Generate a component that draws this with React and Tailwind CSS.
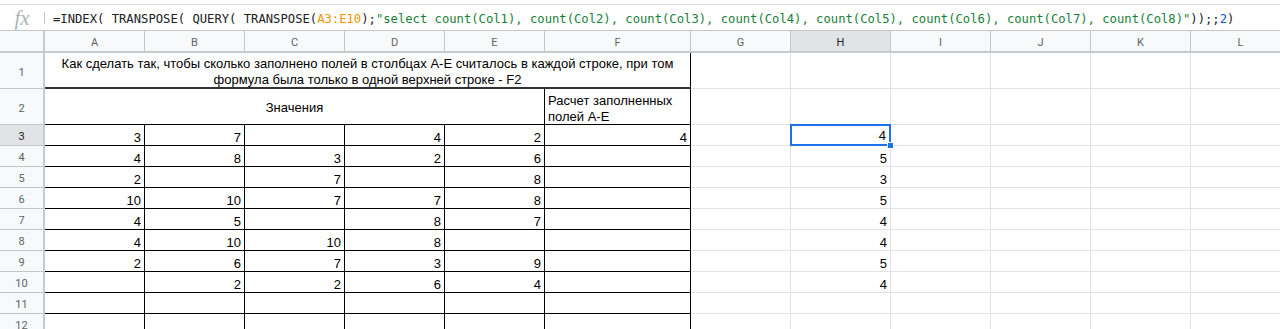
import React from "react";

const cols = ["A", "B", "C", "D", "E", "F", "G", "H", "I", "J", "K", "L"];
const data = [
  [3, 7, "", 4, 2],
  [4, 8, 3, 2, 6],
  [2, "", 7, "", 8],
  [10, 10, 7, 7, 8],
  [4, 5, "", 8, 7],
  [4, 10, 10, 8, ""],
  [2, 6, 7, 3, 9],
  ["", 2, 2, 6, 4],
  ["", "", "", "", ""],
  ["", "", "", "", ""],
];
const fVals = [4, "", "", "", "", "", "", "", "", ""];
const hVals = [4, 5, 3, 5, 4, 4, 5, 4, "", ""];

const cellFont = { fontFamily: '"Liberation Sans", Arial, sans-serif' };
const hdrFont = { fontFamily: 'Roboto, "Liberation Sans", Arial, sans-serif' };

function RowHeader({ n, active }) {
  return (
    <div
      className={`flex items-center justify-center pt-[5px] border-b border-[#c4c7c5] border-r-2 border-r-[#c8cacc] text-[11px] ${
        active ? "bg-[#e1e3e6] text-[#202124]" : "bg-[#f8f9fa] text-[#5f6368]"
      }`}
      style={hdrFont}
    >
      {n}
    </div>
  );
}

function NumCell({ v, black = true }) {
  return (
    <div
      className={`flex items-end justify-end pr-[3px] text-[13px] leading-[15px] text-black border-r border-b ${
        black ? "border-black" : "border-[#e2e3e3]"
      }`}
      style={cellFont}
    >
      {v}
    </div>
  );
}

function GridCell() {
  return <div className="border-r border-b border-[#e2e3e3]" />;
}

export default function App() {
  return (
    <div className="w-[1280px] h-[329px] overflow-hidden bg-white">
      <div className="h-[4px] bg-white" />
      <div className="h-[26px] border-t border-[#dadce0] flex items-center">
        <div className="w-[44px] flex justify-center pt-[2px]">
          <span
            className="italic text-[21px] text-[#b0b3b7] leading-none"
            style={{ fontFamily: '"Liberation Serif", "DejaVu Serif", serif' }}
          >
            fx
          </span>
        </div>
        <div className="w-px h-[12px] bg-[#c4c7c5]" />
        <div
          className="ml-[8px] pt-[4px] whitespace-nowrap text-[12.2px] text-[#202124]"
          style={{ fontFamily: '"DejaVu Sans Mono", "Liberation Mono", monospace' }}
        >
          =INDEX( TRANSPOSE( QUERY( TRANSPOSE(
          <span className="text-[#f09300]">A3:E10</span>);
          <span className="text-[#188038]">
            "select count(Col1), count(Col2), count(Col3), count(Col4), count(Col5), count(Col6), count(Col7), count(Col8)"
          </span>
          ));;<span className="text-[#1155cc]">2</span>)
        </div>
      </div>

      <div className="grid grid-cols-[45px_100px_100px_100px_100px_100px_146px_100px_100px_100px_100px_100px_100px] grid-rows-[23px_36px_36px_repeat(10,21px)] w-[1291px]">
        {/* header */}
        <div className="bg-[#f8f9fa] border-t border-[#c4c7c5] border-b-2 border-b-[#c8cacc] border-r-2 border-r-[#c8cacc]" />
        {cols.map((c) => (
          <div
            key={c}
            className={`flex items-center justify-center pt-[4px] border-t border-[#c4c7c5] border-r border-r-[#c4c7c5] border-b-2 border-b-[#c8cacc] text-[11px] ${
              c === "H" ? "bg-[#e1e3e6] text-[#202124]" : "bg-[#f8f9fa] text-[#5f6368]"
            }`}
            style={hdrFont}
          >
            {c}
          </div>
        ))}

        {/* row 1 */}
        <RowHeader n={1} />
        <div
          className="col-span-6 flex items-center justify-center text-center pt-[4px] text-[13px] leading-[16px] text-black border-r border-r-black border-b-2 border-b-[#333]"
          style={cellFont}
        >
          <div>
            Как сделать так, чтобы сколько заполнено полей в столбцах A-E считалось в каждой строке, при том
            <br />
            формула была только в одной верхней строке - F2
          </div>
        </div>
        {[0, 1, 2, 3, 4, 5].map((i) => (
          <GridCell key={i} />
        ))}

        {/* row 2 */}
        <RowHeader n={2} />
        <div
          className="col-span-5 flex items-center justify-center pt-[3px] text-[13px] leading-[16px] text-black border-r border-b border-black"
          style={cellFont}
        >
          Значения
        </div>
        <div
          className="flex items-center pl-[3px] pt-[5px] text-[13px] leading-[16px] text-black border-r border-b border-black"
          style={cellFont}
        >
          <div>
            Расчет заполненных
            <br />
            полей A-E
          </div>
        </div>
        {[0, 1, 2, 3, 4, 5].map((i) => (
          <GridCell key={i} />
        ))}

        {/* data rows */}
        {data.map((row, r) => (
          <React.Fragment key={r}>
            <RowHeader n={r + 3} active={r === 0} />
            {row.map((v, c) => (
              <NumCell key={c} v={v} />
            ))}
            <NumCell v={fVals[r]} />
            <GridCell />
            {r === 0 ? (
              <div className="relative border-r border-b border-[#e2e3e3]">
                <div
                  className="absolute -left-px -top-px -right-px -bottom-px flex items-end justify-end pr-[3px] pb-px text-[13px] leading-[15px] text-black border-2 border-[#1a73e8]"
                  style={cellFont}
                >
                  {hVals[r]}
                </div>
                <div className="absolute -right-[4px] -bottom-[4px] w-[7px] h-[7px] bg-[#1a73e8] border border-white" />
              </div>
            ) : (
              <NumCell v={hVals[r]} black={false} />
            )}
            <GridCell />
            <GridCell />
            <GridCell />
            <GridCell />
          </React.Fragment>
        ))}
      </div>
    </div>
  );
}
